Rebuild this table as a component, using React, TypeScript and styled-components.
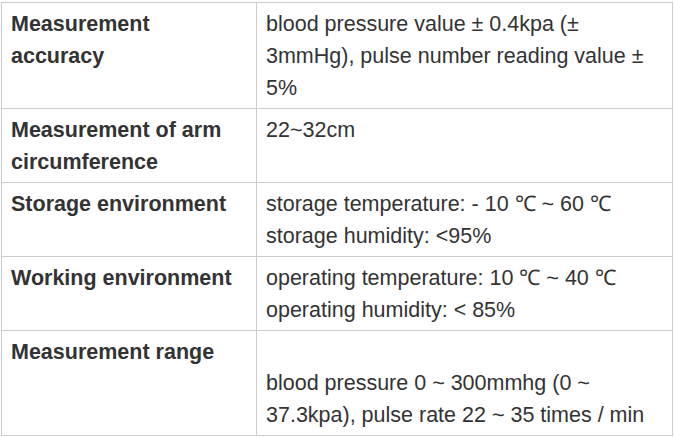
import React from "react";
import styled, { createGlobalStyle } from "styled-components";

const Global = createGlobalStyle`
  html, body { margin: 0; padding: 0; background: #ffffff; }
  body { font-family: "Liberation Sans", Arial, sans-serif; }
`;

const Page = styled.div`
  padding: 2px 0 0 1px;
`;

const Table = styled.table`
  border-collapse: collapse;
  width: 672px;
  table-layout: fixed;
  color: #333333;
  font-size: 21.5px;
  line-height: 32px;
`;

const Row = styled.tr``;

const Cell = styled.td<{ $head?: boolean }>`
  border: 1px solid #cccccc;
  padding: 5px 9px 4px;
  vertical-align: top;
  font-weight: ${(p) => (p.$head ? 700 : 400)};
  width: ${(p) => (p.$head ? "236px" : "auto")};
`;

const Line = styled.div<{ $short?: boolean }>`
  min-height: ${(p) => (p.$short ? "31px" : "32px")};
`;

const rows: { label: string; value: string[] }[] = [
  {
    label: "Measurement accuracy",
    value: ["blood pressure value ± 0.4kpa (± 3mmHg), pulse number reading value ± 5%"],
  },
  { label: "Measurement of arm circumference", value: ["22~32cm"] },
  {
    label: "Storage environment",
    value: ["storage temperature: - 10 ℃ ~ 60 ℃", "storage humidity: <95%"],
  },
  {
    label: "Working environment",
    value: ["operating temperature: 10 ℃ ~ 40 ℃", "operating humidity: < 85%"],
  },
  {
    label: "Measurement range",
    value: ["", "blood pressure 0 ~ 300mmhg (0 ~ 37.3kpa), pulse rate 22 ~ 35 times / min"],
  },
];

export default function App() {
  return (
    <>
      <Global />
      <Page>
        <Table>
          <tbody>
            {rows.map((r) => (
              <Row key={r.label}>
                <Cell $head>{r.label}</Cell>
                <Cell>
                  {r.value.map((v, i) => (
                    <Line key={i} $short={v === ""}>
                      {v}
                    </Line>
                  ))}
                </Cell>
              </Row>
            ))}
          </tbody>
        </Table>
      </Page>
    </>
  );
}
